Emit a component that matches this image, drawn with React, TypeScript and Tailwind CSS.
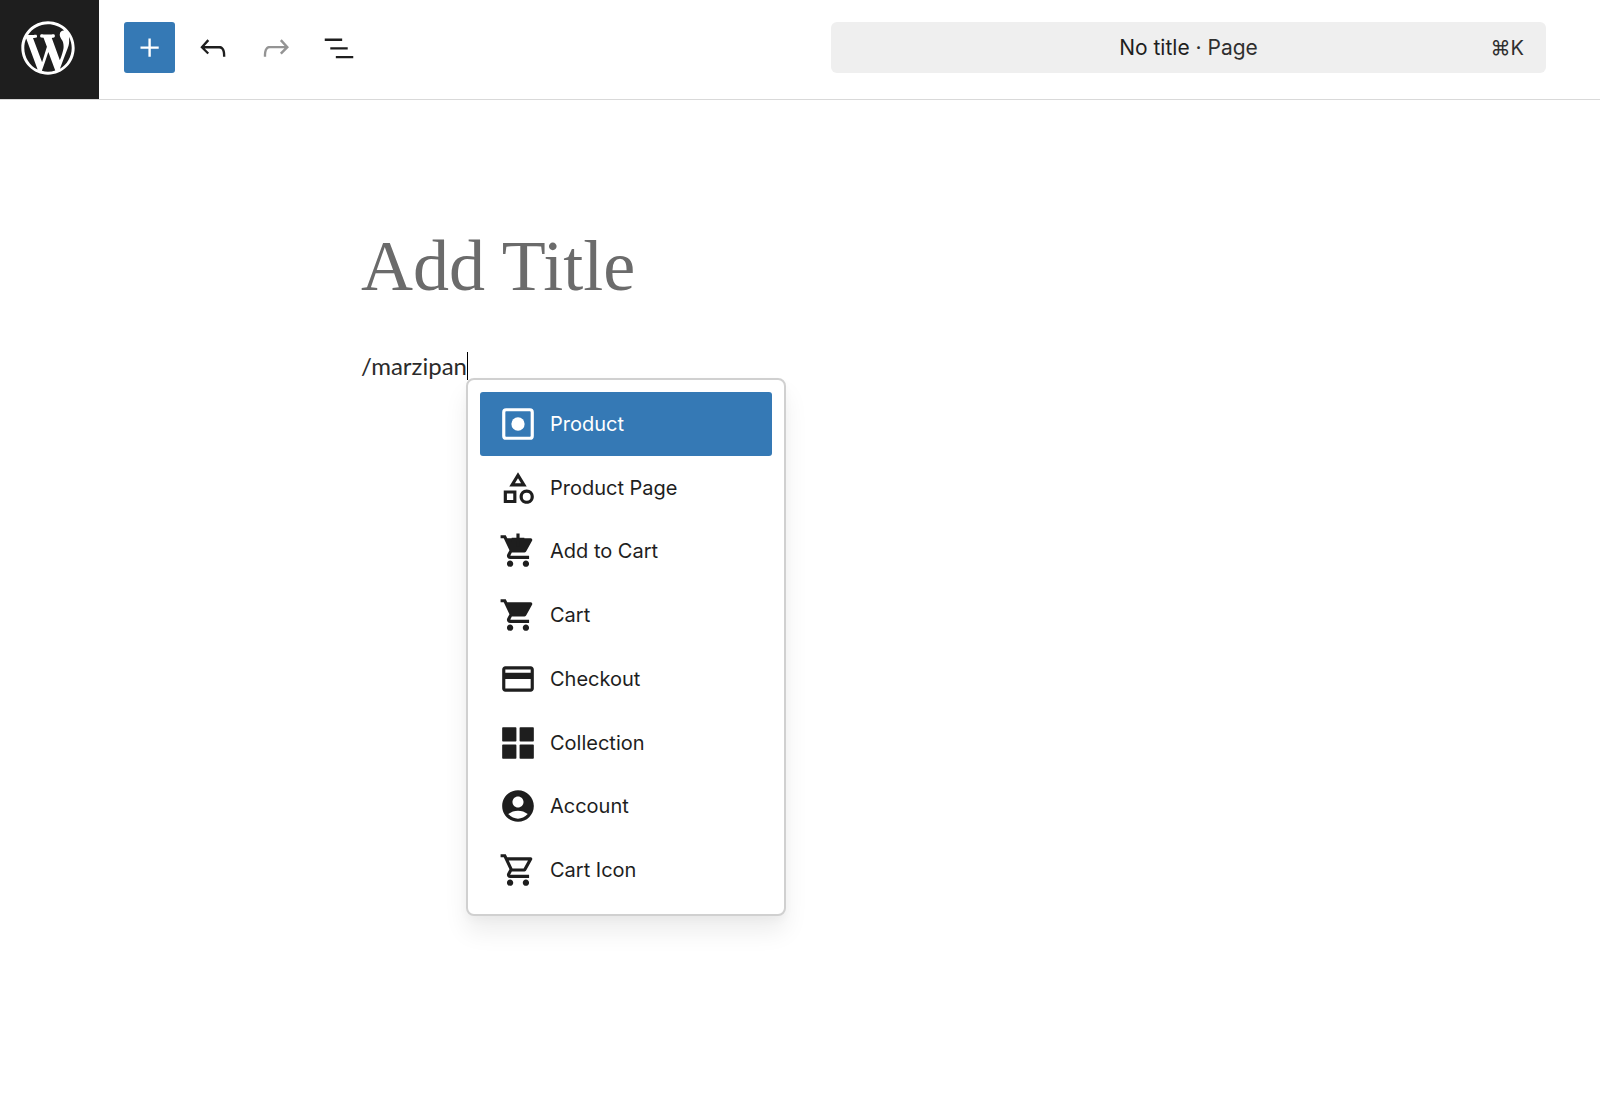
import React from 'react';
import {
  MdAccountCircle,
  MdOutlineCategory,
  MdOutlineCreditCard,
  MdOutlineShoppingCart,
  MdShoppingCart,
} from 'react-icons/md';

interface BlockItem {
  label: string;
  icon: React.ReactNode;
}

interface ToolbarButtonProps {
  label: string;
  path: string;
  primary?: boolean;
  disabled?: boolean;
}

const iconSize = 'size-[38px] shrink-0';

const paths = {
  plus: 'M11 12.5V17.5H12.5V12.5H17.5V11H12.5V6H11V11H6V12.5H11Z',
  undo: 'M18.3 11.7c-.6-.6-1.4-.9-2.3-.9H6.7l2.9-3.3-1.1-1-4.5 5L8.5 16l1-1-2.7-2.7H16c.5 0 .9.2 1.3.5 1 1 1 3.4 1 4.5v.3h1.5v-.2c0-1.5 0-4.3-1.5-5.7z',
  redo: 'M15.6 6.5l-1.1 1 2.9 3.3H8c-.9 0-1.7.3-2.3.9-1.4 1.5-1.4 4.2-1.4 5.6v.2h1.5v-.3c0-1.1 0-3.5 1-4.5.3-.3.7-.5 1.3-.5h9.2L14.5 15l1.1 1.1 4.6-4.6-4.6-5z',
  listView: 'M3 6h11v1.5H3V6Zm3.5 5.5h11V13h-11v-1.5ZM21 17H10v1.5h11V17Z',
};

const blocks: BlockItem[] = [
  {
    label: 'Product',
    icon: (
      <svg viewBox="0 0 24 24" className={iconSize} fill="none">
        <rect x="3" y="3" width="18" height="18" rx="1.5" stroke="currentColor" strokeWidth="2" />
        <circle cx="12" cy="12" r="4.2" fill="currentColor" />
      </svg>
    ),
  },
  { label: 'Product Page', icon: <MdOutlineCategory className={iconSize} /> },
  {
    label: 'Add to Cart',
    icon: (
      <svg viewBox="0 0 24 24" className={iconSize} fill="currentColor">
        <path d="M7 18c-1.1 0-1.99.9-1.99 2S5.9 22 7 22s2-.9 2-2-.9-2-2-2zM1 2v2h2l3.6 7.59-1.35 2.45c-.16.28-.25.61-.25.96 0 1.1.9 2 2 2h12v-2H7.42c-.14 0-.25-.11-.25-.25l.03-.12.9-1.63h7.45c.75 0 1.41-.41 1.75-1.03l3.58-6.49A1.003 1.003 0 0 0 20 4H5.21l-.94-2H1zm16 16c-1.1 0-1.99.9-1.99 2s.89 2 1.99 2 2-.9 2-2-.9-2-2-2z" />
        <path d="M11 9h2V6h3V3.6h-3V1h-2v2.6H8V6h3z" />
      </svg>
    ),
  },
  { label: 'Cart', icon: <MdShoppingCart className={iconSize} /> },
  { label: 'Checkout', icon: <MdOutlineCreditCard className={iconSize} /> },
  {
    label: 'Collection',
    icon: (
      <svg viewBox="0 0 24 24" className={iconSize} fill="currentColor">
        <rect x="2" y="2" width="9" height="9" rx="0.5" />
        <rect x="13" y="2" width="9" height="9" rx="0.5" />
        <rect x="2" y="13" width="9" height="9" rx="0.5" />
        <rect x="13" y="13" width="9" height="9" rx="0.5" />
      </svg>
    ),
  },
  { label: 'Account', icon: <MdAccountCircle className={iconSize} /> },
  { label: 'Cart Icon', icon: <MdOutlineShoppingCart className={iconSize} /> },
];

function WordPressLogo() {
  return (
    <svg viewBox="-2 -2 24 24" className="size-16" fill="currentColor">
      <path d="M20 10c0-5.51-4.49-10-10-10C4.48 0 0 4.49 0 10c0 5.52 4.48 10 10 10 5.51 0 10-4.48 10-10zM7.78 15.37L4.37 6.22c.55-.02 1.17-.08 1.17-.08.5-.06.44-1.13-.06-1.11 0 0-1.45.11-2.37.11-.18 0-.37 0-.58-.01C4.12 2.69 6.87 1.11 10 1.11c2.33 0 4.45.87 6.05 2.34-.68-.11-1.65.39-1.65 1.58 0 .74.45 1.36.9 2.1.35.61.55 1.36.55 2.46 0 1.49-1.4 5-1.4 5l-3.03-8.37c.54-.02.82-.17.82-.17.5-.05.44-1.25-.06-1.22 0 0-1.44.12-2.38.12-.87 0-2.33-.12-2.33-.12-.5-.03-.56 1.2-.06 1.22l.92.08 1.26 3.41zM17.41 10c.24-.64.74-1.87.43-4.25.7 1.29 1.05 2.71 1.05 4.25 0 3.29-1.73 6.24-4.4 7.78.97-2.59 1.94-5.2 2.92-7.78zM6.1 18.09C3.12 16.65 1.11 13.53 1.11 10c0-1.3.23-2.48.72-3.59C3.25 10.3 4.67 14.2 6.1 18.09zm4.03-6.63l2.58 6.98c-.86.29-1.76.45-2.71.45-.79 0-1.57-.11-2.29-.33.81-2.38 1.62-4.74 2.42-7.1z" />
    </svg>
  );
}

function ToolbarButton({ label, path, primary, disabled }: ToolbarButtonProps) {
  return (
    <button
      type="button"
      aria-label={label}
      disabled={disabled}
      className={`flex size-[51px] items-center justify-center rounded-[3px] ${
        primary ? 'bg-[#3579b5] text-white' : disabled ? 'text-[#949494]' : 'text-[#1e1e1e]'
      }`}
    >
      <svg viewBox="0 0 24 24" className={iconSize} fill="currentColor">
        <path d={path} />
      </svg>
    </button>
  );
}

function EditorHeader() {
  return (
    <header className="flex items-start border-b border-[#d9d9d9]">
      <a href="#" aria-label="View Pages" className="size-[99px] shrink-0 bg-[#1e1e1e] p-4 text-white">
        <WordPressLogo />
      </a>
      <div className="flex flex-1 items-center justify-between pt-[22px] pr-[54px] pl-[25px]">
        <div className="flex gap-3">
          <ToolbarButton label="Add block" path={paths.plus} primary />
          <ToolbarButton label="Undo" path={paths.undo} />
          <ToolbarButton label="Redo" path={paths.redo} disabled />
          <ToolbarButton label="Document Overview" path={paths.listView} />
        </div>
        <button
          type="button"
          className="grid h-[51px] w-[715px] grid-cols-[1fr_auto_1fr] items-center rounded-md bg-[#efefef] px-[22px] text-[21px] text-[#2f2f2f]"
        >
          <span className="col-start-2">
            <span className="text-[#1e1e1e]">No title</span> · Page
          </span>
          <kbd className="justify-self-end font-['Inter',sans-serif] text-[20px]">⌘K</kbd>
        </button>
      </div>
    </header>
  );
}

function BlockMenu({ items }: { items: BlockItem[] }) {
  return (
    <div
      role="listbox"
      aria-label="Blocks"
      className="absolute top-[26px] left-full -ml-px flex h-[538px] w-80 flex-col rounded-lg border-2 border-[#d0d0d0] bg-white p-3 shadow-[0_16px_24px_rgba(0,0,0,0.07),0_4px_8px_rgba(0,0,0,0.03)]"
    >
      {items.map((item, idx) => (
        <button
          key={item.label}
          type="button"
          role="option"
          aria-selected={idx === 0}
          className={`flex flex-1 items-center gap-[13px] rounded-[3px] px-[19px] text-[20px] ${
            idx === 0 ? 'bg-[#3579b5] text-white' : 'text-[#1e1e1e]'
          }`}
        >
          {item.icon}
          {item.label}
        </button>
      ))}
    </div>
  );
}

export default function App() {
  return (
    <div className="min-h-screen bg-white font-['Inter',sans-serif]">
      <EditorHeader />
      <main className="mx-auto max-w-[878px] pt-[126px]">
        <input
          type="text"
          aria-label="Add title"
          placeholder="Add Title"
          className="block h-20 w-full font-['Liberation_Serif',serif] text-[72px] leading-[80px] outline-none placeholder:text-[#6b6b6b]"
        />
        <div className="relative mt-[46px] flex h-7 w-fit">
          <input
            type="text"
            aria-label="Block"
            defaultValue="/marzipan"
            className="field-sizing-content h-7 font-['Lato',sans-serif] text-[24px] leading-7 text-[#2b2b2b] outline-none"
          />
          <BlockMenu items={blocks} />
          <span className="absolute left-full h-7 w-px bg-black" />
        </div>
      </main>
    </div>
  );
}
